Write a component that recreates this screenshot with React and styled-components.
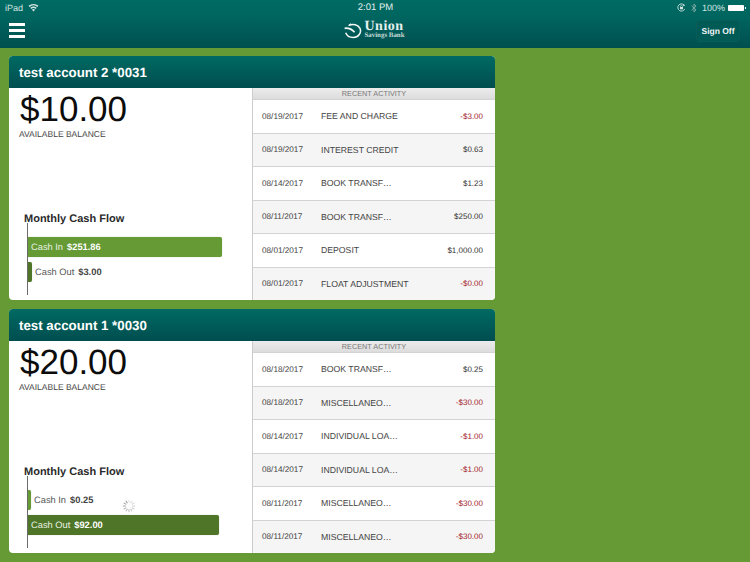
import React from "react";
import styled, { createGlobalStyle } from "styled-components";

const Global = createGlobalStyle`
  html, body { margin: 0; padding: 0; }
  body {
    width: 750px;
    height: 562px;
    overflow: hidden;
    background: #659a34;
    font-family: "Liberation Sans", Arial, sans-serif;
    text-rendering: geometricPrecision;
  }
`;

const Page = styled.div`
  position: relative;
  width: 750px;
  height: 562px;
  overflow: hidden;
  background: #659a34;
`;

const Header = styled.header`
  height: 48px;
  background: linear-gradient(#006b63 0%, #00655f 35%, #004f4f 100%);
  color: #fff;
`;

const StatusBar = styled.div`
  display: grid;
  grid-template-columns: 1fr auto 1fr;
  align-items: center;
  height: 15px;
  padding: 0 4px 0 5px;
  font-size: 9px;
  color: #d3e3e0;
`;

const StatusLeft = styled.div`
  display: flex;
  align-items: center;
  gap: 5px;
`;

const StatusTime = styled.div`
  font-size: 9.5px;
  color: #e4efed;
`;

const StatusRight = styled.div`
  display: flex;
  align-items: center;
  justify-content: flex-end;
  gap: 5px;
`;

const Battery = styled.span`
  position: relative;
  width: 16px;
  height: 6px;
  margin: 0 2px 0 -2px;
  background: #fff;
  border-radius: 1px;
  &::after {
    content: "";
    position: absolute;
    right: -2px;
    top: 2px;
    width: 1px;
    height: 2px;
    background: #fff;
  }
`;

const NavBar = styled.div`
  display: grid;
  grid-template-columns: 1fr auto 1fr;
  align-items: center;
  height: 33px;
  padding: 0 10px 0 9px;
`;

const Burger = styled.div`
  display: flex;
  flex-direction: column;
  gap: 3px;
  width: 16px;
  margin-top: -2px;
  span {
    display: block;
    height: 3px;
    background: #fff;
  }
`;

const Logo = styled.div`
  display: flex;
  align-items: center;
  gap: 2px;
  margin-top: -2px;
`;

const LogoText = styled.div`
  display: flex;
  flex-direction: column;
  font-family: "Liberation Serif", serif;
  color: #e6f0ee;
`;

const LogoName = styled.span`
  font-size: 14px;
  font-weight: 700;
  line-height: 10px;
  letter-spacing: 0.5px;
`;

const LogoSub = styled.span`
  font-size: 6.9px;
  font-weight: 700;
  line-height: 8px;
  color: #c9dcd9;
`;

const SignOff = styled.div`
  justify-self: end;
  width: 44px;
  height: 22px;
  margin-top: -2px;
  border: 1px solid #0a5c58;
  border-radius: 4px;
  box-sizing: border-box;
  background: #005a56;
  display: flex;
  align-items: center;
  justify-content: center;
  font-size: 8.5px;
  font-weight: 700;
  color: #f1f6f5;
`;

const Cards = styled.main`
  display: flex;
  flex-direction: column;
  gap: 9px;
  width: 486px;
  padding: 8px 0 0 9px;
`;

const Card = styled.section`
  height: 244px;
  border-radius: 4px;
  overflow: hidden;
  background: #fff;
  display: flex;
  flex-direction: column;
`;

const CardTitle = styled.h2`
  margin: 0;
  height: 32px;
  flex: none;
  padding-left: 10px;
  display: flex;
  align-items: center;
  background: linear-gradient(#006a62, #004e4f);
  color: #fff;
  font-size: 13.3px;
  font-weight: 700;
`;

const CardBody = styled.div`
  flex: 1;
  display: flex;
  min-height: 0;
`;

const Summary = styled.div`
  position: relative;
  width: 243px;
  flex: none;
  padding: 2px 0 0 9px;
  box-sizing: border-box;
  color: #111;
`;

const Balance = styled.div`
  margin-left: 2px;
  font-size: 35px;
  line-height: 40px;
  color: #0c0c0c;
`;

const BalanceLabel = styled.div`
  margin: -1px 0 0 1px;
  font-size: 8.5px;
  line-height: 10px;
  color: #444;
`;

const FlowTitle = styled.div`
  margin: 74px 0 0 6px;
  font-size: 11px;
  line-height: 13px;
  font-weight: 700;
  color: #2a2a2a;
`;

const Chart = styled.div`
  margin: -3px 0 0 9px;
  padding-top: 14px;
  height: 72px;
  box-sizing: border-box;
  display: flex;
  flex-direction: column;
  gap: 5px;
  border-left: 1px solid #6c6c6c;
`;

const BarRow = styled.div`
  display: flex;
  align-items: center;
  height: 20px;
`;

const Bar = styled.div`
  width: ${(p) => p.$w}px;
  height: 20px;
  flex: none;
  box-sizing: border-box;
  border-radius: 0 2px 2px 0;
  background: ${(p) => p.$color};
  box-shadow: 0 0 1px rgba(90, 110, 70, 0.5);
  display: flex;
  align-items: center;
  padding-left: 3px;
  font-size: 9.3px;
  white-space: nowrap;
  color: #e9f1e2;
  strong {
    margin-left: 4px;
    color: #fff;
  }
`;

const BarLabel = styled.div`
  margin-left: 3px;
  font-size: 9.3px;
  color: #555;
  white-space: nowrap;
  strong {
    margin-left: 4px;
    color: #444;
  }
`;

const Spinner = styled.svg`
  position: absolute;
  left: 113px;
  top: 158px;
`;

const Activity = styled.div`
  flex: 1;
  display: flex;
  flex-direction: column;
  border-left: 1px solid #ccc;
`;

const ActivityHead = styled.div`
  height: 11px;
  flex: none;
  display: flex;
  align-items: center;
  justify-content: center;
  background: linear-gradient(#ececec, #dcdcdc);
  color: #777;
  font-size: 7.3px;
`;

const Row = styled.div`
  flex: 1;
  display: grid;
  grid-template-columns: 59px 1fr auto;
  align-items: center;
  padding: 0 12px 0 9px;
  border-top: 1px solid #d3d3d3;
  background: ${(p) => (p.$alt ? "#f5f5f5" : "#fff")};
`;

const RowDate = styled.span`
  font-size: 8.2px;
  color: #444;
`;

const RowName = styled.span`
  font-size: 8.7px;
  color: #444;
`;

const RowAmount = styled.span`
  font-size: 8px;
  color: ${(p) => (p.$neg ? "#a3222c" : "#333")};
`;

const accounts = [
  {
    title: "test account 2 *0031",
    balance: "$10.00",
    bars: [
      { label: "Cash In", value: "$251.86", w: 194, color: "#659a34" },
      { label: "Cash Out", value: "$3.00", w: 4, color: "#4f7628" },
    ],
    rows: [
      ["08/19/2017", "FEE AND CHARGE", "-$3.00"],
      ["08/19/2017", "INTEREST CREDIT", "$0.63"],
      ["08/14/2017", "BOOK TRANSF…", "$1.23"],
      ["08/11/2017", "BOOK TRANSF…", "$250.00"],
      ["08/01/2017", "DEPOSIT", "$1,000.00"],
      ["08/01/2017", "FLOAT ADJUSTMENT", "-$0.00"],
    ],
  },
  {
    title: "test account 1 *0030",
    balance: "$20.00",
    spinner: true,
    bars: [
      { label: "Cash In", value: "$0.25", w: 2, color: "#659a34" },
      { label: "Cash Out", value: "$92.00", w: 191, color: "#4f7628" },
    ],
    rows: [
      ["08/18/2017", "BOOK TRANSF…", "$0.25"],
      ["08/18/2017", "MISCELLANEO…", "-$30.00"],
      ["08/14/2017", "INDIVIDUAL LOA…", "-$1.00"],
      ["08/14/2017", "INDIVIDUAL LOA…", "-$1.00"],
      ["08/11/2017", "MISCELLANEO…", "-$30.00"],
      ["08/11/2017", "MISCELLANEO…", "-$30.00"],
    ],
  },
];

function Wifi() {
  return (
    <svg width="11" height="9" viewBox="0 0 11 9" fill="#d3e3e0">
      <path d="M5.5 8.6 3.9 6.7a2.4 2.4 0 0 1 3.2 0z" />
      <path d="M3.2 5.9 2.3 4.8a5 5 0 0 1 6.4 0L7.8 5.9a3.6 3.6 0 0 0-4.6 0z" />
      <path d="M1.6 4 .5 2.8a7.6 7.6 0 0 1 10 0L9.4 4a6 6 0 0 0-7.8 0z" />
    </svg>
  );
}

function RotationLock() {
  return (
    <svg width="9" height="9" viewBox="0 0 10 10" fill="none">
      <path d="M8.6 6.6A4 4 0 1 1 8 2.400" stroke="#d3e3e0" strokeWidth="1" />
      <path d="M7 1.200 9 2.600 7 3.800z" fill="#d3e3e0" />
      <rect x="3.300" y="4.400" width="3.400" height="2.600" fill="#d3e3e0" />
      <path d="M4 4.400V3.600a1 1 0 0 1 2 0v.8" stroke="#d3e3e0" strokeWidth=".7" />
    </svg>
  );
}

function Bluetooth() {
  return (
    <svg width="6" height="10" viewBox="0 0 6 10" fill="none" stroke="#8fb5af" strokeWidth=".8">
      <path d="M.5 2.700 5 6.900 3 9V1l2 2.100L.5 7.300" />
    </svg>
  );
}

// clock-like ring, open on the upper left, with the swoosh running into it
function LogoMark() {
  return (
    <svg width="18" height="16" viewBox="0 0 18 16" fill="none" stroke="#f2f7f6">
      <path d="M5 2.300C9 .6 14.200 1.600 16 5.400c1.800 4.300-1.400 9-6.800 9-3.700 0-6.500-1.900-7.500-4.700" strokeWidth="1.500" />
      <path d="M.6 5.300c3.400-.4 7 .6 10 4" strokeWidth="1.700" />
      <path d="M4.600 2.600 7 .8" strokeWidth="1.100" />
    </svg>
  );
}

function LoadingSpinner() {
  const spokes = Array.from({ length: 12 }, (_, i) => i);
  return (
    <Spinner width="14" height="14" viewBox="0 0 14 14">
      {spokes.map((i) => (
        <line
          key={i}
          x1="7"
          y1="0.8"
          x2="7"
          y2="3.800"
          stroke="#8d8d8d"
          strokeWidth="1"
          strokeOpacity={0.25 + (i / 12) * 0.75}
          transform={`rotate(${i * 30} 7 7)`}
        />
      ))}
    </Spinner>
  );
}

function AccountCard({ account }) {
  return (
    <Card>
      <CardTitle>{account.title}</CardTitle>
      <CardBody>
        <Summary>
          <Balance>{account.balance}</Balance>
          <BalanceLabel>AVAILABLE BALANCE</BalanceLabel>
          <FlowTitle>Monthly Cash Flow</FlowTitle>
          <Chart>
            {account.bars.map((b) =>
              b.w > 50 ? (
                <BarRow key={b.label}>
                  <Bar $w={b.w} $color={b.color}>
                    {b.label}
                    <strong>{b.value}</strong>
                  </Bar>
                </BarRow>
              ) : (
                <BarRow key={b.label}>
                  <Bar $w={b.w} $color={b.color} />
                  <BarLabel>
                    {b.label}
                    <strong>{b.value}</strong>
                  </BarLabel>
                </BarRow>
              )
            )}
          </Chart>
          {account.spinner && <LoadingSpinner />}
        </Summary>
        <Activity>
          <ActivityHead>RECENT ACTIVITY</ActivityHead>
          {account.rows.map((r, i) => (
            <Row key={i} $alt={i % 2 === 1}>
              <RowDate>{r[0]}</RowDate>
              <RowName>{r[1]}</RowName>
              <RowAmount $neg={r[2].startsWith("-")}>{r[2]}</RowAmount>
            </Row>
          ))}
        </Activity>
      </CardBody>
    </Card>
  );
}

export default function App() {
  return (
    <Page>
      <Global />
      <Header>
        <StatusBar>
          <StatusLeft>
            iPad <Wifi />
          </StatusLeft>
          <StatusTime>2:01 PM</StatusTime>
          <StatusRight>
            <RotationLock />
            <Bluetooth />
            100%
            <Battery />
          </StatusRight>
        </StatusBar>
        <NavBar>
          <Burger>
            <span />
            <span />
            <span />
          </Burger>
          <Logo>
            <LogoMark />
            <LogoText>
              <LogoName>Union</LogoName>
              <LogoSub>Savings Bank</LogoSub>
            </LogoText>
          </Logo>
          <SignOff>Sign Off</SignOff>
        </NavBar>
      </Header>
      <Cards>
        {accounts.map((a) => (
          <AccountCard key={a.title} account={a} />
        ))}
      </Cards>
    </Page>
  );
}
